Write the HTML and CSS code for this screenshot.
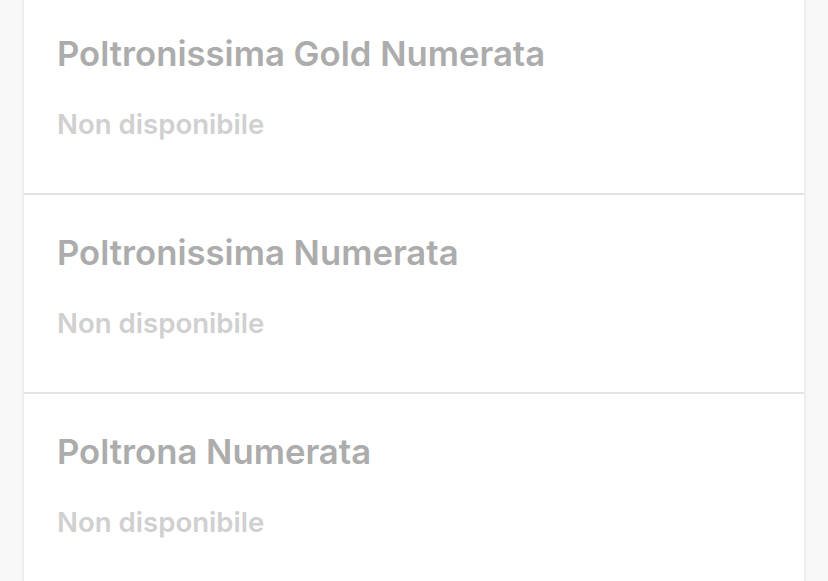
FILE: index.html
```html
<!DOCTYPE html>
<html>
<head>
<meta charset="utf-8">
<link rel="stylesheet" href="styles.css">
</head>
<body>
<div class="card">
  <div class="row">
    <div class="title">Poltronissima Gold Numerata</div>
    <div class="status">Non disponibile</div>
  </div>
  <div class="row">
    <div class="title">Poltronissima Numerata</div>
    <div class="status">Non disponibile</div>
  </div>
  <div class="row">
    <div class="title">Poltrona Numerata</div>
    <div class="status">Non disponibile</div>
  </div>
</div>
</body>
</html>
```
FILE: styles.css
```css
html, body {
  margin: 0;
  padding: 0;
  background: #f8f8f8;
  font-family: Inter, "Noto Sans", sans-serif;
  overflow: hidden;
}
.card {
  margin: -4px 24px 0;
  background: #fff;
  box-shadow: 0 0 4px rgba(0,0,0,0.12);
}
.row {
  height: 199px;
  box-sizing: border-box;
  padding: 0 33px;
  border-bottom: 2px solid #e3e3e3;
}
.title {
  padding-top: 34px;
  font-size: 34.7px;
  line-height: 46px;
  font-weight: 600;
  color: #acacac;
}
.status {
  margin-top: 30px;
  font-size: 27.6px;
  line-height: 36px;
  font-weight: 600;
  color: #d0d0d0;
}
```
